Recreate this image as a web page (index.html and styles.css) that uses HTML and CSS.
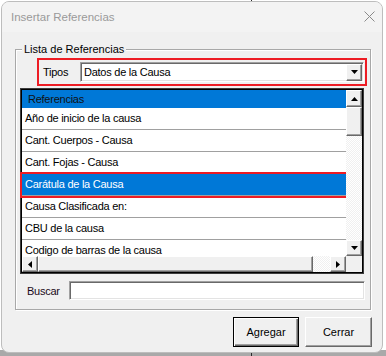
FILE: index.html
```html
<!DOCTYPE html>
<html lang="es">
<head>
<meta charset="UTF-8">
<title>Insertar Referencias</title>
<link rel="stylesheet" href="styles.css">
</head>
<body>
<div class="window">
  <div class="titlebar">
    <span class="title">Insertar Referencias</span>
    <svg class="close" width="11" height="11" viewBox="0 0 11 11"><path d="M0.5 0.5L10.5 10.5M10.5 0.5L0.5 10.5" stroke="#8a8a8a" stroke-width="1"/></svg>
  </div>

  <!-- Lista de Referencias -->
  <div class="group">
    <span class="group-label">Lista de Referencias</span>

    <div class="tipos">
      <span class="tipos-label">Tipos</span>
      <div class="combo">
        <span class="combo-value">Datos de la Causa</span>
        <span class="drop-btn"><svg width="7" height="4" viewBox="0 0 7 4"><polygon points="0,0 7,0 3.5,4" fill="#000"/></svg></span>
      </div>
    </div>

    <div class="list">
      <div class="rows">
        <div class="list-header">Referencias</div>
        <div class="row">Año de inicio de la causa</div>
        <div class="row">Cant. Cuerpos - Causa</div>
        <div class="row">Cant. Fojas - Causa</div>
        <div class="row selected">Carátula de la Causa</div>
        <div class="row">Causa Clasificada en:</div>
        <div class="row">CBU de la causa</div>
        <div class="row">Codigo de barras de la causa</div>
      </div>
      <div class="vscroll">
        <span class="sb-btn sb-up"><svg width="7" height="4" viewBox="0 0 7 4"><polygon points="0,4 7,4 3.5,0" fill="#000"/></svg></span>
        <span class="sb-thumb-v"></span>
        <span class="sb-track"></span>
        <span class="sb-btn sb-down"><svg width="7" height="4" viewBox="0 0 7 4"><polygon points="0,0 7,0 3.5,4" fill="#000"/></svg></span>
      </div>
      <div class="hscroll">
        <span class="sb-btn sb-left"><svg width="4" height="7" viewBox="0 0 4 7"><polygon points="4,0 4,7 0,3.5" fill="#000"/></svg></span>
        <span class="sb-thumb-h"></span>
        <span class="sb-track"></span>
        <span class="sb-btn sb-right"><svg width="4" height="7" viewBox="0 0 4 7"><polygon points="0,0 0,7 4,3.5" fill="#000"/></svg></span>
      </div>
      <div class="corner"></div>
    </div>

    <div class="search">
      <span class="search-label">Buscar</span>
      <input type="text" class="search-input">
    </div>
  </div>

  <div class="buttons">
    <button type="button" class="btn btn-default">Agregar</button>
    <button type="button" class="btn">Cerrar</button>
  </div>
</div>
</body>
</html>
```

FILE: styles.css
```css
body {
    margin: 0;
    width: 386px;
    height: 356px;
    overflow: hidden;
    font-family: "Liberation Sans", Arial, sans-serif;
    font-size: 11px;
    color: #000;
    background:
        linear-gradient(#2b2b2b, #2b2b2b) 251px 0 / 1px 356px no-repeat,
        linear-gradient(#fff 0, #fff 350px, #a9a9a9 350px);
}
.window {
    box-sizing: border-box;
    margin: 1px 0 0 1px;
    width: 382px;
    height: 352px;
    border: 1px solid #bdbdbd;
    border-radius: 8px;
    background: #f0f0f0;
    overflow: hidden;
    display: flex;
    flex-direction: column;
}
.titlebar {
    height: 30px;
    flex: none;
    display: flex;
    align-items: center;
    justify-content: space-between;
    padding: 0 7px 0 9px;
    background: #f3f3f3;
}
.title {
    font-size: 11.5px;
    color: #9a9a9a;
}
.close {
    display: block;
    margin-top: -1px;
}

/* group box */
.group {
    position: relative;
    box-sizing: border-box;
    margin: 17px 0 0 13px;
    width: 356px;
    border: 1px solid #a8a8a8;
    box-shadow: inset 1px 1px #fff, 1px 1px #fff;
    padding: 8px 0 9px 0;
    letter-spacing: -0.25px;
}
.group-label {
    position: absolute;
    top: -7px;
    left: 6px;
    padding: 0 2px;
    line-height: 13px;
    background: #f0f0f0;
    letter-spacing: 0;
}
.tipos {
    box-sizing: border-box;
    margin-left: 21px;
    width: 330px;
    height: 28px;
    border: 2px solid #ed1c24;
    display: flex;
    align-items: center;
}
.tipos-label {
    margin-left: 4px;
}
.combo {
    box-sizing: border-box;
    margin: 0 1px 0 auto;
    width: 284px;
    height: 20px;
    background: #fff;
    border: 1px solid;
    border-color: #a0a0a0 #fff #fff #a0a0a0;
    box-shadow: inset 1px 1px #696969, inset -1px -1px #e3e3e3;
    display: flex;
    align-items: center;
    padding: 1px 1px 1px 3px;
}
.combo-value {
    flex: 1;
}
.drop-btn {
    box-sizing: border-box;
    width: 16px;
    height: 17px;
    background: #f0f0f0;
    border: 1px solid;
    border-color: #fff #696969 #696969 #fff;
    box-shadow: inset -1px -1px #a0a0a0;
    display: flex;
    align-items: center;
    justify-content: center;
}

/* list */
.list {
    margin: 3px 0 0 5px;
    width: 340px;
    border: 1px solid #000;
    box-shadow: 0 0 0 1px #3c3c3c;
    display: grid;
    grid-template-columns: 324px 16px;
    grid-template-rows: 166px 16px;
}
.rows {
    overflow-y: clip;
    overflow-x: visible;
    background: #fff;
}
.list-header {
    height: 18px;
    line-height: 18px;
    padding-left: 6px;
    background: #0078d7;
    color: #111;
}
.row {
    height: 21px;
    line-height: 21px;
    padding-left: 3px;
    border-bottom: 1px solid #a0a0a0;
    white-space: nowrap;
}
.row.selected {
    background: #0078d7;
    color: #fff;
    outline: 2px solid #ed1c24;
}
.vscroll {
    display: flex;
    flex-direction: column;
}
.hscroll {
    display: flex;
}
.sb-btn {
    box-sizing: border-box;
    flex: none;
    width: 16px;
    height: 16px;
    background: #f0f0f0;
    border: 1px solid;
    border-color: #fff #696969 #696969 #fff;
    box-shadow: inset -1px -1px #a0a0a0;
    display: flex;
    align-items: center;
    justify-content: center;
}
.sb-up {
    height: 17px;
}
.sb-thumb-v {
    box-sizing: border-box;
    flex: none;
    height: 29px;
    background: #f0f0f0;
    border: 1px solid;
    border-color: #fff #696969 #696969 #fff;
    box-shadow: inset -1px -1px #a0a0a0;
}
.sb-thumb-h {
    box-sizing: border-box;
    flex: none;
    width: 275px;
    background: #f0f0f0;
    border: 1px solid;
    border-color: #fff #696969 #696969 #fff;
    box-shadow: inset -1px -1px #a0a0a0;
}
.sb-track {
    flex: 1;
    background: repeating-conic-gradient(#f0f0f0 0 25%, #fff 0 50%) 0 0 / 2px 2px;
}
.corner {
    background: #f0f0f0;
}

/* search */
.search {
    margin-top: 8px;
    display: flex;
    align-items: center;
}
.search-label {
    margin-left: 11px;
    color: #1a0a1a;
}
.search-input {
    box-sizing: border-box;
    margin: 0 5px 0 auto;
    width: 296px;
    height: 19px;
    padding: 0 3px;
    background: #fff;
    border: 1px solid;
    border-color: #a0a0a0 #fff #fff #a0a0a0;
    box-shadow: inset 1px 1px #696969, inset -1px -1px #e3e3e3;
    outline: none;
}

/* buttons */
.buttons {
    margin: 7px 10px 0 0;
    display: flex;
    justify-content: flex-end;
    gap: 6px;
}
.btn {
    box-sizing: border-box;
    width: 67px;
    height: 30px;
    padding: 0;
    font-family: "Liberation Sans", Arial, sans-serif;
    font-size: 11px;
    color: #000;
    background: #f0f0f0;
    border: 1px solid;
    border-color: #fff #696969 #696969 #fff;
    box-shadow: inset -1px -1px #a0a0a0;
}
.btn-default {
    width: 66px;
    border: 1px solid #000;
    box-shadow: inset 1px 1px #fff, inset -1px -1px #696969, inset -2px -2px #a0a0a0;
}
```
